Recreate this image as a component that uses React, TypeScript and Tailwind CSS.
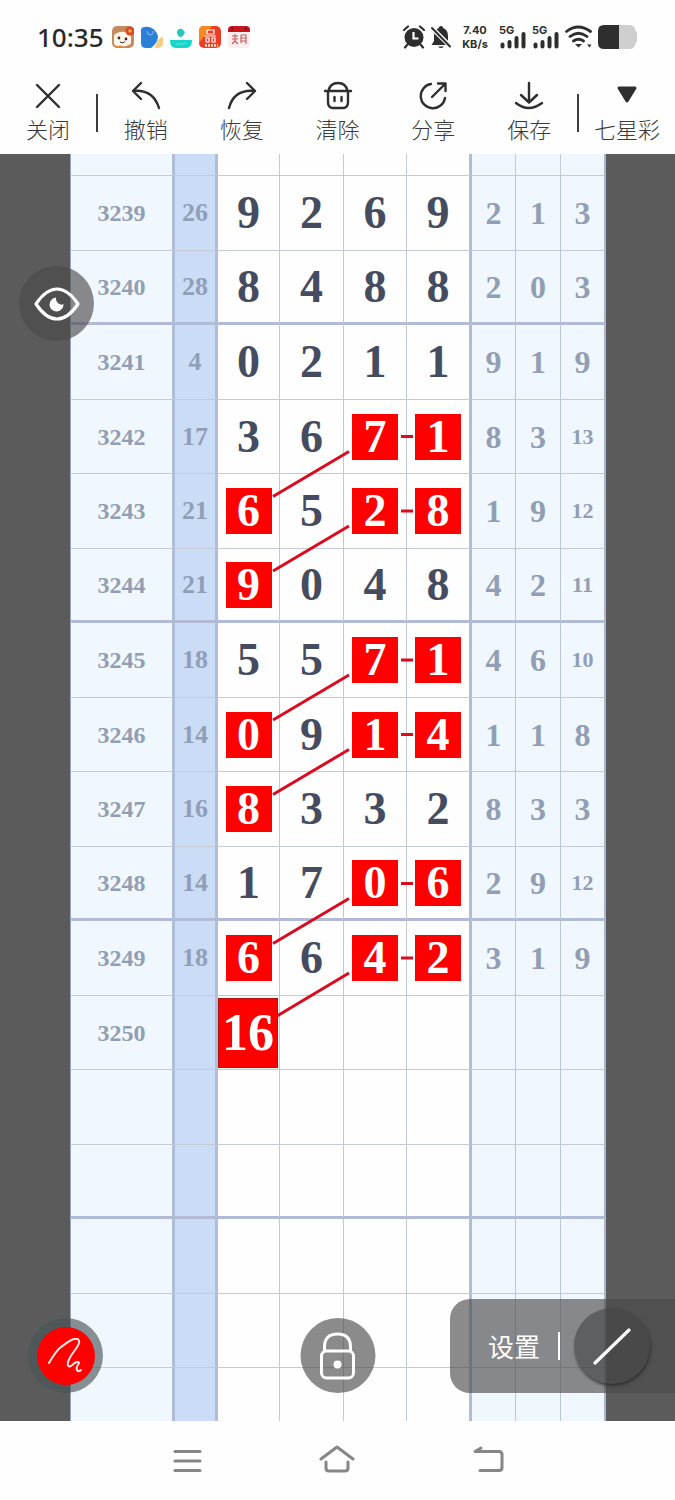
import type { ReactNode } from 'react'

type Cell = { value: string; marked?: boolean }
type Draw = { issue: string; sum: string; digits: Cell[]; extra: string[] }

// "*" after a digit marks it with a red square
const draw = (issue: string, sum: string, digits: string, extra: string): Draw => ({
  issue,
  sum,
  digits: digits.split(' ').map(d => ({ value: d.replace('*', ''), marked: d.endsWith('*') })),
  extra: extra.split(' '),
})

const DRAWS: Draw[] = [
  draw('3239', '26', '9 2 6 9', '2 1 3'),
  draw('3240', '28', '8 4 8 8', '2 0 3'),
  draw('3241', '4', '0 2 1 1', '9 1 9'),
  draw('3242', '17', '3 6 7* 1*', '8 3 13'),
  draw('3243', '21', '6* 5 2* 8*', '1 9 12'),
  draw('3244', '21', '9* 0 4 8', '4 2 11'),
  draw('3245', '18', '5 5 7* 1*', '4 6 10'),
  draw('3246', '14', '0* 9 1* 4*', '1 1 8'),
  draw('3247', '16', '8* 3 3 2', '8 3 3'),
  draw('3248', '14', '1 7 0* 6*', '2 9 12'),
  draw('3249', '18', '6* 6 4* 2*', '3 1 9'),
]

const BLANK: Draw = { issue: '', sum: '', digits: [{ value: '' }, { value: '' }, { value: '' }, { value: '' }], extra: ['', '', ''] }

const ROWS: Draw[] = [
  ...DRAWS,
  { ...BLANK, issue: '3250', digits: [{ value: '16', marked: true }, { value: '' }, { value: '' }, { value: '' }] },
  BLANK, BLANK, BLANK, BLANK,
]

// rows whose third digit is joined to the fourth and to the first of the next row
const LINKED = [3, 4, 6, 7, 9, 10]

function ToolButton({ label, children }: { label: string; children: ReactNode }) {
  return (
    <button type="button" className="flex flex-1 flex-col items-center text-[22px] leading-8 font-light text-[#3a3a3a]">
      <svg width="32" height="32" viewBox="0 0 32 32" fill="none" stroke="#2e2e2e" strokeWidth="2.4" strokeLinecap="round" strokeLinejoin="round" aria-hidden="true">
        {children}
      </svg>
      <span className="whitespace-nowrap">{label}</span>
    </button>
  )
}

function Divider() {
  return <span className="mt-3.5 h-[38px] w-0.5 shrink-0 bg-[#3c3c3c]" />
}

function AppIcons() {
  return (
    <div className="flex gap-[7px]">
      <svg width="22" height="22" viewBox="0 0 22 22" aria-hidden="true">
        <rect width="22" height="22" rx="5" fill="#c58a5e" />
        <path d="M2 9c4-4 13-5 17 1v7c-2 4-14 5-17 1z" fill="#fff6ea" />
        <circle cx="18" cy="5" r="4.5" fill="#d84a20" />
        <circle cx="18" cy="5" r="1.8" fill="#f5a469" />
        <circle cx="7" cy="12" r="1.4" fill="#352a25" />
        <circle cx="14" cy="13" r="1.4" fill="#352a25" />
        <path d="M8 16q3 2 5-.5" stroke="#352a25" fill="none" />
        <path d="M3 21q5-3 9 0z" fill="#e78a3a" />
      </svg>
      <svg width="22" height="22" viewBox="0 0 22 22" aria-hidden="true">
        <path d="M14 22c1-6 4-11 8-11v6c0 3-2 5-6 5z" fill="#f2cf82" />
        <path d="M0 4q0-3 4-3c6-1 11 3 13 9 0 5-3 9-7 12H5q-5 0-5-5z" fill="#2a7fd8" />
        <path d="M6 5q0 4 4 4q3-1 2-4" stroke="#8dbef0" fill="none" />
      </svg>
      <svg width="22" height="22" viewBox="0 0 22 22" aria-hidden="true">
        <path d="M7 6q1-4 5-3l3 3-1 2q-1 3-4 3-3-1-3-5z" fill="#24c7bd" />
        <path d="M0 14h22q0 8-6 8H6q-6 0-6-8z" fill="#18d6c8" />
        <path d="M6 18q5 1 10-1" stroke="#5aeee2" fill="none" />
      </svg>
      <svg width="22" height="22" viewBox="0 0 22 22" aria-hidden="true">
        <rect width="22" height="22" rx="5" fill="#ee3b24" />
        <path d="M0 5q0-5 5-5h8L0 17z" fill="#f8891f" />
        <path d="M8 4h7v4H8zM5 10h12M7 12h3v4H7zM13 12h3v4h-3z" stroke="#fff" strokeWidth="1.2" fill="none" />
        <path d="M6 19.500h13" stroke="#ffe5c8" strokeWidth="2.400" strokeDasharray="2 1" />
      </svg>
      <svg width="22" height="22" viewBox="0 0 22 22" aria-hidden="true">
        <rect width="22" height="22" rx="4" fill="#fbeeee" />
        <path d="M0 6V4q0-4 4-4h14q4 0 4 4v2z" fill="#c4161c" />
        <path d="M4 1v3M18 1v3" stroke="#7d0d12" strokeWidth="1.500" />
        <path d="M4 10h6M4 13h6M7 8v7l-3 3M7 15l3 3M13 9h5v9M13 9v8M13 12h5M13 15h5" stroke="#c9545b" strokeWidth="1.100" fill="none" />
      </svg>
    </div>
  )
}

function Signal() {
  return (
    <svg width="27" height="30" viewBox="0 0 27 30" aria-hidden="true">
      <text x="0" y="12" fontSize="11" fontWeight="700" fill="#2e2e2e">5G</text>
      <path d="M3.500 22.500v2M10.500 20v4.500M17.500 16v8.500M24.500 12v12.500" stroke="#2e2e2e" strokeWidth="4" strokeLinecap="round" />
    </svg>
  )
}

function StatusBar() {
  return (
    <header className="flex h-[74px] items-center justify-between pr-[37px] pl-[37px]">
      <div className="flex items-center gap-2">
        <span className="w-[67px] font-['Noto_Sans'] text-[26px] leading-8 font-medium text-[#2a2a2a]">10:35</span>
        <AppIcons />
      </div>
      <div className="flex items-center gap-1.5 font-['Inter',sans-serif]">
        <svg width="22" height="24" viewBox="0 0 22 24" aria-hidden="true">
          <circle cx="11" cy="12.500" r="9.500" fill="#2e2e2e" />
          <path d="M1 5l4-3.500M21 5l-4-3.500M4 20l-2 2.500M18 20l2 2.500" stroke="#2e2e2e" strokeWidth="2.200" strokeLinecap="round" />
          <path d="M10.500 7v6.500h5" stroke="#fff" strokeWidth="2.200" fill="none" />
        </svg>
        <svg width="20" height="24" viewBox="0 0 20 24" aria-hidden="true">
          <path d="M10 1q2 0 2.200 2Q17 5 17 11v5l2.500 4H.5L3 16v-5q0-6 4.800-8Q8 1 10 1z" fill="#2e2e2e" />
          <path d="M7 21.500h6q-3 3-6 0z" fill="#2e2e2e" />
          <path d="M0 2l20 20" stroke="#fff" strokeWidth="4.500" />
          <path d="M1 3l18 18.500" stroke="#2e2e2e" strokeWidth="2" strokeLinecap="round" />
        </svg>
        <div className="mx-1 flex w-7 flex-col items-center text-[11px] leading-[14px] font-bold text-[#2e2e2e]">
          <span>7.40</span>
          <span>KB/s</span>
        </div>
        <Signal />
        <Signal />
        <svg width="27" height="24" viewBox="0 0 27 24" fill="none" stroke="#2e2e2e" strokeWidth="2.800" strokeLinecap="round" aria-hidden="true">
          <path d="M1.500 6.500Q13 -2.500 25.500 6.500M5 11.500q8.500-6.500 17 0M8.500 16q5-3.500 10 0" />
          <path d="M10 19h7l-3.500 3.500zM22 19.500h4.500l-2 3z" fill="#2e2e2e" stroke="none" />
        </svg>
        <svg width="40" height="24" viewBox="0 0 40 24" aria-hidden="true">
          <path d="M21 0h10q5 0 6 4l2 4v8l-2 4q-1 4-6 4H21z" fill="#cfcfcf" />
          <path d="M21 0H6Q0 0 0 6v12q0 6 6 6h15z" fill="#2e2e2e" />
        </svg>
      </div>
    </header>
  )
}

function Toolbar() {
  return (
    <nav className="flex h-20 items-start pt-1.5">
      <ToolButton label="关闭">
        <path d="M5 5l22 22M27 5L5 27" />
      </ToolButton>
      <Divider />
      <ToolButton label="撤销">
        <path d="M11 3L3 11l8 8M3 11q20-2 26 17" />
      </ToolButton>
      <ToolButton label="恢复">
        <path d="M21 3l8 8-8 8M29 11Q8 9 3 28" />
      </ToolButton>
      <ToolButton label="清除">
        <path d="M3 11h26M6.500 11Q8 3 16 3t9.500 8M6 11v11q0 6 5 6h10q5 0 5-6V11M12.500 17v4M19.500 17v4" />
      </ToolButton>
      <ToolButton label="分享">
        <path d="M14 4A12.200 12.200 0 1 0 28 18M15 17L28 4M21 3.500h7.500V11" />
      </ToolButton>
      <ToolButton label="保存">
        <path d="M16 3v19M8 15l8 7.500 8-7.500M3 23q12.500 10 26 0" />
      </ToolButton>
      <Divider />
      <ToolButton label="七星彩">
        <path d="M8 8h16l-8 13z" fill="#2e2e2e" strokeWidth="3" />
      </ToolButton>
    </nav>
  )
}

function Digit({ cell }: { cell: Cell }) {
  if (cell.value.length > 1) {
    return (
      <span className="mr-px flex h-[70px] items-center justify-center border border-[#b01010] bg-[#fe0000] text-[52px] leading-none text-white">
        {cell.value}
      </span>
    )
  }
  if (cell.marked) {
    return <span className="mx-auto flex size-[46px] items-center justify-center bg-[#fe0000] leading-none text-white">{cell.value}</span>
  }
  return <>{cell.value}</>
}

function TrendRow({ row, tall, thick, last }: { row: Draw; tall: boolean; thick: boolean; last: boolean }) {
  const height = last ? 'h-[53px]' : tall ? 'h-[75px]' : 'h-[74px]'
  const line = last ? '' : thick ? 'border-b-3 border-b-[#b1bbd6]' : 'border-b border-b-[#c3cbd6]'
  return (
    <tr className={height}>
      <th scope="row" className={`border-r-3 border-l border-r-[#b1bdd6] border-l-[#9aa6b8] bg-[#f0f7fe] p-0 text-2xl leading-none font-bold text-[#919eb3] ${line}`}>{row.issue}</th>
      <td className={`border-r-3 border-r-[#b1bdd6] bg-[#cbddf6] p-0 text-[26px] leading-none text-[#919eb8] ${line}`}>{row.sum}</td>
      {row.digits.map((cell, i) => (
        <td key={i} className={`p-0 text-[46px] leading-none text-[#454c60] ${i === 3 ? 'border-r-3 border-r-[#b1bdd6]' : 'border-r border-r-[#c3c8d2]'} ${line}`}>
          <Digit cell={cell} />
        </td>
      ))}
      {row.extra.map((value, i) => (
        <td key={i} className={`bg-[#f0f7fe] p-0 leading-none text-[#919eb3] ${value.length > 1 ? 'text-[22px]' : 'text-[32px]'} ${i === 2 ? 'border-r-2 border-r-[#aab6c9]' : 'border-r border-r-[#bcc7d6]'} ${line}`}>
          {value}
        </td>
      ))}
    </tr>
  )
}

function Links() {
  return (
    <svg className="pointer-events-none absolute inset-0 h-full w-full" viewBox="0 0 536 1267" preserveAspectRatio="none" fill="none" stroke="#dc0a1e" strokeWidth="3" aria-hidden="true">
      {LINKED.map(i => {
        const y = 59 + i * 74.5
        const end = i === 10 ? 'L207 ' + (y + 58) : 'L203 ' + (y + 60)
        return <path key={i} d={`M331 ${y}h12M279 ${y + 15}${end}`} />
      })}
    </svg>
  )
}

function Board() {
  return (
    <div className="bg-[#5b5b5b] pr-[69px] pl-[70px]">
      <div className="relative bg-[#fefefe]">
        <table className="w-full table-fixed border-separate border-spacing-0 text-center font-['Liberation_Serif',serif] font-bold">
          <colgroup>
            <col className="w-[105px]" />
            <col className="w-[43px]" />
            <col className="w-[62px]" />
            <col className="w-[64px]" />
            <col className="w-[63px]" />
            <col className="w-[65px]" />
            <col className="w-[44px]" />
            <col className="w-[45px]" />
            <col className="w-[45px]" />
          </colgroup>
          <tbody>
            <tr className="h-[22px]">
              <td className="border-r-3 border-b border-l border-r-[#b1bdd6] border-b-[#c3cbd6] border-l-[#9aa6b8] bg-[#f0f7fe] p-0" />
              <td className="border-r-3 border-b border-r-[#b1bdd6] border-b-[#c3cbd6] bg-[#cbddf6] p-0" />
              <td className="border-r border-b border-[#c3cbd6] p-0" />
              <td className="border-r border-b border-[#c3cbd6] p-0" />
              <td className="border-r border-b border-[#c3cbd6] p-0" />
              <td className="border-r-3 border-b border-r-[#b1bdd6] border-b-[#c3cbd6] p-0" />
              <td className="border-r border-b border-[#c3cbd6] bg-[#f0f7fe] p-0" />
              <td className="border-r border-b border-[#c3cbd6] bg-[#f0f7fe] p-0" />
              <td className="border-r-2 border-b border-r-[#aab6c9] border-b-[#c3cbd6] bg-[#f0f7fe] p-0" />
            </tr>
            {ROWS.map((row, i) => (
              <TrendRow key={i} row={row} tall={i % 2 === 0} thick={i % 4 === 1} last={false} />
            ))}
            <TrendRow row={BLANK} tall={false} thick={false} last />
          </tbody>
        </table>
        <Links />
      </div>
    </div>
  )
}

function FloatingControls() {
  return (
    <>
      <button type="button" aria-label="显示" className="absolute top-[112px] left-[19px] flex size-[75px] items-center justify-center rounded-full bg-[#494949]/64">
        <svg width="46" height="34" viewBox="0 0 46 34" fill="none" aria-hidden="true">
          <path d="M2 17Q12 2 23 2t21 15Q34 32 23 32T2 17z" stroke="#fff" strokeWidth="3.200" strokeLinejoin="round" />
          <path d="M22 10.500a7 7 0 1 0 7.500 6.500q-2.500 1.500-5-.500-3-2.500-2.500-6z" fill="#fff" />
        </svg>
      </button>
      <button type="button" aria-label="画笔" className="absolute bottom-[28px] left-[28px] flex size-[75px] items-center justify-center rounded-full bg-[#4a5458]/64">
        <span className="flex size-[58px] items-center justify-center rounded-full bg-[#fe0000]">
          <svg width="36" height="36" viewBox="0 0 36 36" fill="none" stroke="#ffe9e4" strokeWidth="2" strokeLinecap="round" strokeLinejoin="round" aria-hidden="true">
            <path d="M1 25C5 18 9 12 13 9S22 2 26 1q6-1 5 4c-1 4-5 8-7.500 12S19 25 20 27.500c2 3 5-2 7.500-3s4.500-.5 3 1.500-2.500 4-1.500 6 3 1 4 0" />
          </svg>
        </span>
      </button>
      <button type="button" aria-label="锁定" className="absolute bottom-[28px] left-1/2 flex size-[75px] -translate-x-1/2 items-center justify-center rounded-full bg-[#494949]/64">
        <svg width="36" height="48" viewBox="0 0 36 48" fill="none" stroke="#fff" strokeWidth="3" aria-hidden="true">
          <path d="M5 19v-4Q5 2 18 2t13 13v4" />
          <rect x="2" y="19" width="32" height="27" rx="5" />
          <circle cx="18" cy="32.500" r="4" fill="#fff" stroke="none" />
        </svg>
      </button>
      <div className="absolute right-0 bottom-[28px] flex h-[94px] w-[225px] items-center rounded-l-[20px] bg-[#494949]/64 pl-[38px] text-white">
        <button type="button" className="text-[26px] leading-8">设置</button>
        <span className="ml-[18px] h-7 w-0.5 bg-white" />
        <button type="button" aria-label="直线" className="ml-3.5 flex size-[76px] items-center justify-center rounded-full bg-[#454545]/60 shadow-[1px_2px_3px_#333333]">
          <svg width="38" height="38" viewBox="0 0 38 38" stroke="#fff" strokeWidth="3.200" strokeLinecap="round" aria-hidden="true">
            <path d="M2 36L36 3" />
          </svg>
        </button>
      </div>
    </>
  )
}

function SystemNav() {
  return (
    <footer className="grid grid-cols-3 justify-items-center px-28 pt-6 pb-5">
      <button type="button" aria-label="菜单">
        <svg width="36" height="32" viewBox="0 0 36 32" stroke="#868686" strokeWidth="3" strokeLinecap="round" aria-hidden="true">
          <path d="M6 6.500h25M6 16h25M6 25.500h25" />
        </svg>
      </button>
      <button type="button" aria-label="主页">
        <svg width="36" height="32" viewBox="0 0 36 32" fill="none" stroke="#868686" strokeWidth="3" strokeLinecap="round" strokeLinejoin="round" aria-hidden="true">
          <path d="M2 14L18 2l16 12M7 17v6q0 3 3 3h16q3 0 3-3v-6" />
        </svg>
      </button>
      <button type="button" aria-label="返回">
        <svg width="36" height="32" viewBox="0 0 36 32" fill="none" stroke="#868686" strokeWidth="3" strokeLinecap="round" strokeLinejoin="round" aria-hidden="true">
          <path d="M11 3L5 6.500h24q3 0 3 3v13q0 3-3 3H10" />
        </svg>
      </button>
    </footer>
  )
}

export default function App() {
  return (
    <div className="min-h-screen bg-[#fefefe] font-['Noto_Sans_CJK_SC',sans-serif]">
      <StatusBar />
      <Toolbar />
      <main className="relative">
        <Board />
        <FloatingControls />
      </main>
      <SystemNav />
    </div>
  )
}
